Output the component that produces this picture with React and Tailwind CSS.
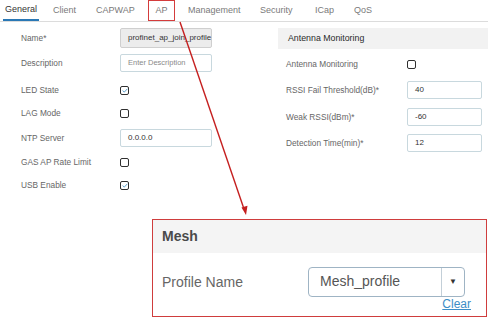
import React from "react";

// Tabs across the top, widths tuned so every label lands where it should
const tabs = [
  { label: "General", w: "w-[53px]" },
  { label: "Client", w: "w-[43px]" },
  { label: "CAPWAP", w: "w-[52px]" },
  { label: "AP", w: "w-[40px]" },
  { label: "Management", w: "w-[72px]" },
  { label: "Security", w: "w-[55px]" },
  { label: "ICap", w: "w-[39px]" },
  { label: "QoS", w: "w-[40px]" },
];

function Checkbox({ checked }) {
  return (
    <span className="flex h-[9px] w-[9px] items-center justify-center rounded-[2px] border-[1.5px] border-[#2f2f2f] bg-white">
      {checked && (
        <svg width="6" height="5" viewBox="0 0 6 5" fill="none">
          <path d="M0.6 2.6 L2.3 4.1 L5.4 0.8" stroke="#5b9fca" strokeWidth="1" />
        </svg>
      )}
    </span>
  );
}

function TextBox({ value, placeholder, disabled, w = "w-[92px]", h = "h-[18px]" }) {
  return (
    <div
      className={`${w} ${h} flex items-center rounded-[2px] border px-[7px] text-[8px] ${
        disabled ? "border-[#cfcfcf] bg-[#ececec] text-[#333]" : "border-[#c8d8de] bg-white text-[#333]"
      }`}
    >
      {value ? value : <span className="text-[7.5px] text-[#8a8a8a]">{placeholder}</span>}
    </div>
  );
}

function LeftRow({ label, mt, h = "h-[18px]", children }) {
  return (
    <div className={`flex items-center ${mt} ${h}`}>
      <div className="w-[120px] pl-[21px] text-[8.3px] text-[#666]">{label}</div>
      {children}
    </div>
  );
}

function RightRow({ label, mt, children }) {
  return (
    <div className={`flex h-[18px] items-center ${mt}`}>
      <div className="w-[129px] pl-[8px] text-[8.3px] text-[#666]">{label}</div>
      {children}
    </div>
  );
}

export default function App() {
  return (
    <div
      className="relative h-[317px] w-[488px] overflow-hidden bg-white"
      style={{ fontFamily: '"Liberation Sans", Arial, sans-serif' }}
    >
      {/* tab strip */}
      <div className="flex h-[22px] items-stretch border-b border-[#dcdcdc] text-[9px] text-[#7a7a7a]">
        {tabs.map((t) => (
          <div key={t.label} className={`${t.w} flex items-center`}>
            {t.label === "General" ? (
              <span className="ml-[3px] flex h-full items-center border-b-[2px] border-[#2a78b5] px-[2px] pt-[1px] text-[#333]">
                General
              </span>
            ) : t.label === "AP" ? (
              <span className="flex h-[21px] w-[27px] items-center justify-center border border-[#d43c3c]">AP</span>
            ) : (
              <span>{t.label}</span>
            )}
          </div>
        ))}
      </div>

      <div className="flex">
        {/* left column */}
        <div className="flex w-[278px] flex-col">
          <LeftRow label="Name*" mt="mt-[6px]" h="h-[20px]">
            <TextBox value="profinet_ap_join_profile" disabled h="h-[20px]" />
          </LeftRow>
          <LeftRow label="Description" mt="mt-[6px]">
            <TextBox placeholder="Enter Description" />
          </LeftRow>
          <LeftRow label="LED State" mt="mt-[9px]">
            <Checkbox checked />
          </LeftRow>
          <LeftRow label="LAG Mode" mt="mt-[5px]">
            <Checkbox />
          </LeftRow>
          <LeftRow label="NTP Server" mt="mt-[7px]">
            <TextBox value="0.0.0.0" />
          </LeftRow>
          <LeftRow label="GAS AP Rate Limit" mt="mt-[6px]">
            <Checkbox />
          </LeftRow>
          <LeftRow label="USB Enable" mt="mt-[5px]">
            <Checkbox checked />
          </LeftRow>
        </div>

        {/* right column */}
        <div className="flex w-[210px] flex-col">
          <div className="mt-[6px] flex h-[21px] items-center bg-[#f2f2f2] pl-[10px] text-[8.8px] text-[#2a2a2a]">
            Antenna Monitoring
          </div>
          <RightRow label="Antenna Monitoring" mt="mt-[6px]">
            <Checkbox />
          </RightRow>
          <RightRow label="RSSI Fail Threshold(dB)*" mt="mt-[8px]">
            <TextBox value="40" w="w-[75px]" />
          </RightRow>
          <RightRow label="Weak RSSI(dBm)*" mt="mt-[9px]">
            <TextBox value="-60" w="w-[75px]" />
          </RightRow>
          <RightRow label="Detection Time(min)*" mt="mt-[8px]">
            <TextBox value="12" w="w-[75px]" />
          </RightRow>
        </div>
      </div>

      {/* Mesh panel */}
      <div className="ml-[152px] mt-[25px] h-[98px] w-[335px] border-[1.5px] border-[#cf3d3d]">
        <div className="flex h-[33px] items-center bg-[#f4f4f4] pl-[9px] text-[14px] font-bold text-[#4a4a4a]">
          Mesh
        </div>
        <div className="flex pl-[9px] pt-[14px]">
          <div className="flex h-[30px] w-[146px] items-center text-[14px] text-[#666]">Profile Name</div>
          <div className="flex w-[163px] flex-col">
            <div className="flex h-[30px] w-[157px] rounded-[4px] border border-[#9fb4c4] bg-white">
              <div className="flex-1 pl-[11px] pt-[5px] text-[14px] leading-[16px] text-[#555]">Mesh_profile</div>
              <div className="flex w-[23px] items-center justify-center border-l border-[#c3cfd8] text-[8px] text-[#333]">
                ▼
              </div>
            </div>
            <div className="mt-[1px] text-right text-[12px] leading-[13px] text-[#3c8dc6] underline">Clear</div>
          </div>
        </div>
      </div>

      {/* red callout arrow */}
      <svg className="pointer-events-none absolute left-0 top-0" width="488" height="317" viewBox="0 0 488 317">
        <line x1="180" y1="22" x2="244" y2="209" stroke="#c51f1f" strokeWidth="1.4" />
        <polygon points="246,215 241.5,207.5 247.5,205.8" fill="#c51f1f" />
      </svg>
    </div>
  );
}
